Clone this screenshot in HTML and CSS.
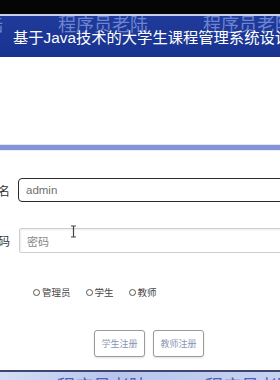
FILE: index.html
```html
<!DOCTYPE html>
<html lang="zh">
<head>
<meta charset="utf-8">
<title>登录</title>
<link rel="stylesheet" href="styles.css">
</head>
<body>
<div class="page">
  <div class="topbar"></div>
  <div class="sep"></div>
  <header class="banner">
    <div class="watermark"><span>程序员老陆</span><span>程序员老陆</span><span>程序员老陆</span></div>
    <h1 class="title">基于Java技术的大学生课程管理系统设计</h1>
  </header>
  <div class="spacer"></div>
  <div class="rule"></div>
  <form class="form">
    <div class="row row-user">
      <span class="label"><span>用户名</span></span>
      <div class="field field-dark"><span class="value">admin</span></div>
    </div>
    <div class="row row-pass">
      <span class="label"><span>密码</span></span>
      <div class="field field-light"><span class="placeholder">密码</span></div>
      <svg class="ibeam" width="7" height="13" viewBox="0 0 7 13"><path d="M1 1h5M3.5 1v11M1 12h5" stroke="#444" stroke-width="1.2" fill="none"/></svg>
    </div>
    <div class="radios">
      <label class="radio"><span class="dot"></span>管理员</label>
      <label class="radio"><span class="dot"></span>学生</label>
      <label class="radio"><span class="dot"></span>教师</label>
    </div>
    <div class="buttons">
      <button type="button" class="btn">学生注册</button>
      <button type="button" class="btn">教师注册</button>
    </div>
  </form>
  <footer class="bottom">
    <div class="bottom-line"></div>
    <div class="bottom-band">
      <div class="watermark2"><span>程序员老陆</span><span>程序员老陆</span><span>程序员老陆</span></div>
    </div>
  </footer>
</div>
</body>
</html>
```

FILE: styles.css
```css
* { box-sizing: border-box; }
html, body { margin: 0; padding: 0; background: #fff; }
body {
  width: 280px;
  height: 380px;
  overflow: hidden;
  font-family: "Liberation Sans", "Noto Sans CJK SC", sans-serif;
}
.page { width: 280px; height: 380px; overflow: hidden; display: flex; flex-direction: column; }
.topbar { height: 14px; background: #050505; flex: none; }
.sep { height: 2px; background: #c9d0e6; flex: none; }
.banner {
  position: relative;
  height: 41px;
  flex: none;
  background: linear-gradient(#1f3a9a, #18338f);
  overflow: hidden;
}
.watermark {
  position: absolute;
  left: -87px;
  top: -5px;
  display: flex;
  gap: 55px;
  font-family: "Noto Sans CJK SC", sans-serif;
  font-size: 18px;
  line-height: 24px;
  color: #6d84d2;
  white-space: nowrap;
}
.title {
  position: relative;
  margin: 0;
  padding: 11px 0 0 13px;
  font-size: 15.3px;
  line-height: 21px;
  font-weight: normal;
  color: #fff;
  white-space: nowrap;
}
.spacer { height: 87px; flex: none; }
.rule {
  height: 7px;
  flex: none;
  border-top: 1px solid #e4e7f2;
  border-bottom: 1px solid #eef0f8;
  background: #8494d6;
}
.form { flex: 1; display: flex; flex-direction: column; }
.row { display: flex; align-items: center; position: relative; }
.row-user { margin-top: 27px; }
.row-pass { margin-top: 26px; }
.label {
  width: 10px;
  flex: none;
  display: flex;
  justify-content: flex-end;
  overflow: hidden;
  white-space: nowrap;
  font-size: 12px;
  color: #333;
  font-family: "Noto Sans CJK SC", sans-serif;
}
.field {
  flex: none;
  width: 290px;
  display: flex;
  align-items: center;
  padding-left: 7px;
  font-size: 11.5px;
}
.field-dark {
  margin-left: 8px;
  height: 24px;
  border: 1.5px solid #2a2a2a;
  border-radius: 4px;
  color: #707070;
}
.field-light {
  margin-left: 9px;
  height: 25px;
  border: 1px solid #cfcfcf;
  border-radius: 2px;
  box-shadow: inset 1px 1px 2px rgba(0,0,0,0.08);
  color: #888;
}
.placeholder { font-family: "Noto Sans CJK SC", sans-serif; font-size: 11px; }
.ibeam { position: absolute; left: 70px; top: -3px; }
.radios {
  display: flex;
  gap: 15px;
  margin: 32px 0 0 33px;
  height: 14px;
  align-items: center;
}
.radio {
  display: flex;
  align-items: center;
  gap: 2px;
  font-family: "Noto Sans CJK SC", sans-serif;
  font-size: 9.5px;
  color: #444;
}
.dot {
  width: 7px;
  height: 7px;
  border: 1px solid #555;
  border-radius: 50%;
}
.buttons {
  display: flex;
  gap: 8px;
  margin: 31px 0 0 94px;
}
.btn {
  width: 51px;
  height: 27px;
  padding: 0;
  background: #fff;
  border: 1px solid #9a9a9a;
  border-radius: 3px;
  box-shadow: 0 1px 2px rgba(0,0,0,0.12);
  font-family: "Noto Sans CJK SC", sans-serif;
  font-size: 9px;
  color: #8795b4;
}
.bottom { flex: none; height: 10px; display: flex; flex-direction: column; }
.bottom-line { height: 2px; background: #3f466e; flex: none; }
.bottom-band {
  position: relative;
  flex: 1;
  overflow: hidden;
  background: linear-gradient(90deg, #d4def5, #b8c6ee 40%, #c6d2f2);
}
.watermark2 {
  position: absolute;
  left: -91px;
  top: 1px;
  display: flex;
  gap: 58px;
  font-family: "Noto Sans CJK SC", sans-serif;
  font-size: 18px;
  line-height: 24px;
  color: #4b62b8;
  white-space: nowrap;
}
```
